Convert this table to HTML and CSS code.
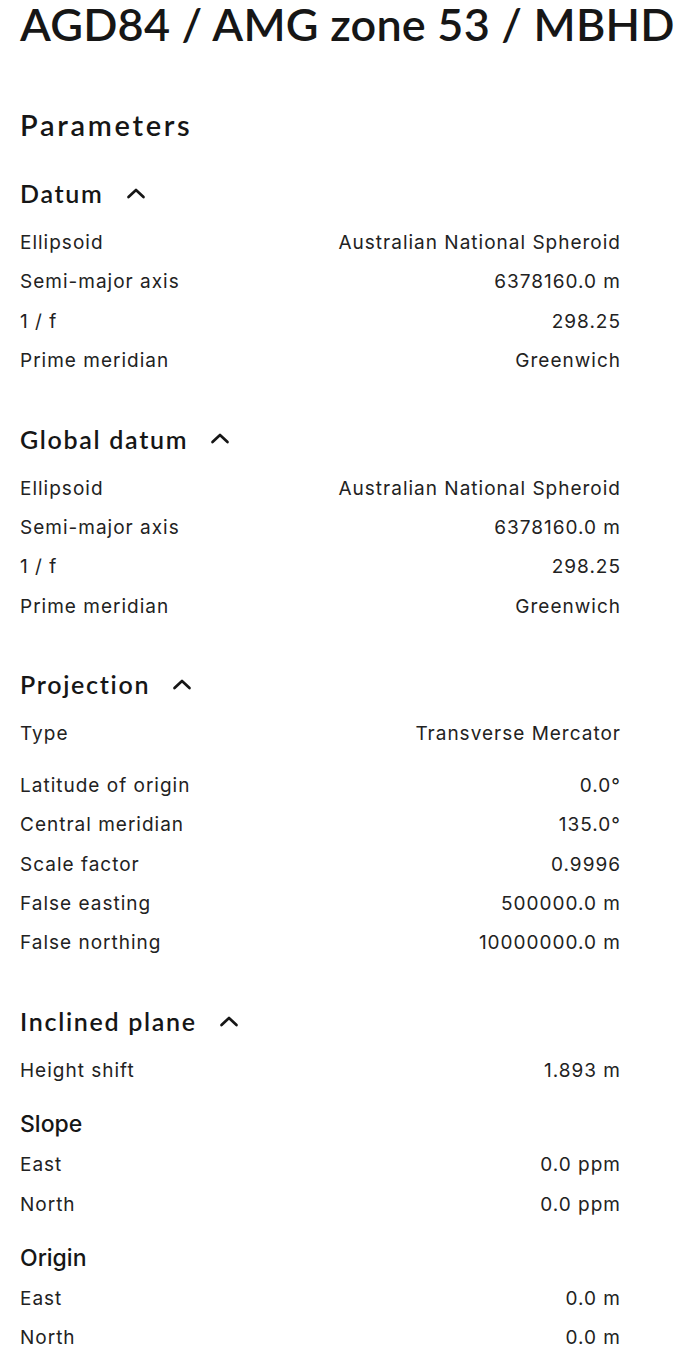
FILE: index.html
```html
<!DOCTYPE html>
<html lang="en">
<head>
    <meta charset="UTF-8">
    <meta name="viewport" content="width=device-width, initial-scale=1.0">
    <title>AGD84 / AMG zone 53 / MBHD</title>
    <link rel="stylesheet" href="styles.css">
</head>
<body>
    <h1 class="crs-title">AGD84 / AMG zone 53 / MBHD</h1>

    <div class="params">
        <h2 class="params-title">Parameters</h2>

        <section class="group">
            <h3 class="group-head">Datum
                <svg class="chevron" width="20" height="11" viewBox="0 0 20 11"><polyline points="2.5,9 10,2 17.5,9"/></svg>
            </h3>
            <div class="row"><span>Ellipsoid</span><span>Australian National Spheroid</span></div>
            <div class="row"><span>Semi-major axis</span><span>6378160.0 m</span></div>
            <div class="row"><span>1 / f</span><span>298.25</span></div>
            <div class="row"><span>Prime meridian</span><span>Greenwich</span></div>
        </section>

        <section class="group">
            <h3 class="group-head">Global datum
                <svg class="chevron" width="20" height="11" viewBox="0 0 20 11"><polyline points="2.5,9 10,2 17.5,9"/></svg>
            </h3>
            <div class="row"><span>Ellipsoid</span><span>Australian National Spheroid</span></div>
            <div class="row"><span>Semi-major axis</span><span>6378160.0 m</span></div>
            <div class="row"><span>1 / f</span><span>298.25</span></div>
            <div class="row"><span>Prime meridian</span><span>Greenwich</span></div>
        </section>

        <section class="group">
            <h3 class="group-head">Projection
                <svg class="chevron" width="20" height="11" viewBox="0 0 20 11"><polyline points="2.5,9 10,2 17.5,9"/></svg>
            </h3>
            <div class="row row-type"><span>Type</span><span>Transverse Mercator</span></div>
            <div class="row"><span>Latitude of origin</span><span>0.0°</span></div>
            <div class="row"><span>Central meridian</span><span>135.0°</span></div>
            <div class="row"><span>Scale factor</span><span>0.9996</span></div>
            <div class="row"><span>False easting</span><span>500000.0 m</span></div>
            <div class="row"><span>False northing</span><span>10000000.0 m</span></div>
        </section>

        <section class="group">
            <h3 class="group-head">Inclined plane
                <svg class="chevron" width="20" height="11" viewBox="0 0 20 11"><polyline points="2.5,9 10,2 17.5,9"/></svg>
            </h3>
            <div class="row"><span>Height shift</span><span>1.893 m</span></div>

            <div class="sub">
                <h4 class="sub-head">Slope</h4>
                <div class="row"><span>East</span><span>0.0 ppm</span></div>
                <div class="row"><span>North</span><span>0.0 ppm</span></div>
            </div>

            <div class="sub">
                <h4 class="sub-head">Origin</h4>
                <div class="row"><span>East</span><span>0.0 m</span></div>
                <div class="row"><span>North</span><span>0.0 m</span></div>
            </div>
        </section>
    </div>
</body>
</html>
```

FILE: styles.css
```css
body {
    font-family: Inter, "Liberation Sans", sans-serif;
    background-color: #fff;
    color: #222;
    margin: 0;
    padding: 0 0 0 20px;
}
.crs-title {
    font-family: Lato, Inter, sans-serif;
    font-size: 45px;
    line-height: 48px;
    font-weight: 600;
    letter-spacing: 0.2px;
    color: #161616;
    margin: 0;
}
.params {
    width: 600px;
}
.params-title {
    font-family: Lato, Inter, sans-serif;
    font-size: 29px;
    line-height: 34px;
    font-weight: 600;
    letter-spacing: 2.7px;
    color: #161616;
    margin: 60px 0 35px;
}
.group {
    margin-bottom: 42.5px;
}
.group-head {
    display: flex;
    align-items: center;
    gap: 22px;
    font-family: Lato, Inter, sans-serif;
    font-size: 25px;
    line-height: 32px;
    font-weight: 600;
    letter-spacing: 1.7px;
    color: #161616;
    margin: 0 0 14px;
}
.chevron {
    fill: none;
    stroke: #161616;
    stroke-width: 2.7;
    stroke-linecap: round;
    stroke-linejoin: round;
}
.row {
    display: flex;
    justify-content: space-between;
    font-size: 19px;
    line-height: 27.3px;
    letter-spacing: 1px;
    padding: 6px 0;
}
.row span:last-child {
    margin-right: -1px;
}
.row-type {
    margin-bottom: 12.5px;
}
.sub {
    margin-top: 19.5px;
}
.sub-head {
    font-size: 23px;
    line-height: 28px;
    font-weight: 500;
    color: #161616;
    margin: 0 0 7.5px;
}
```
